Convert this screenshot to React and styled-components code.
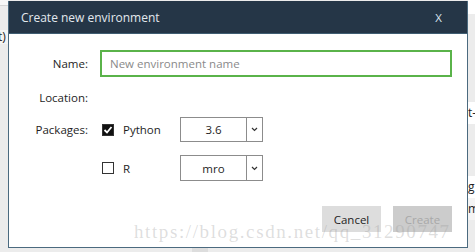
import React from "react";
import styled, { createGlobalStyle } from "styled-components";

const GlobalStyle = createGlobalStyle`
    html, body {
        margin: 0;
        padding: 0;
        background: #ececec;
        overflow: hidden;
    }
`;

const Screen = styled.div`
    width: 475px;
    height: 252px;
    display: flex;
    overflow: hidden;
    position: relative;
    font-family: "Open Sans", "Noto Sans", sans-serif;
    color: #1e1e1e;
`;

const LeftEdge = styled.div`
    width: 8px;
    flex-shrink: 0;
    display: flex;
    flex-direction: column;
    overflow: hidden;
    background: #ececec;
`;

const EdgeBand = styled.div`
    height: ${(p) => p.$h}px;
    flex-shrink: 0;
    background: ${(p) => p.$bg || "#ececec"};
    border-bottom: ${(p) => (p.$line ? "1px solid #d4d4d4" : "none")};
    font-size: 12px;
    line-height: ${(p) => p.$h}px;
    white-space: nowrap;
    text-indent: ${(p) => p.$indent || 0}px;
    color: #222;
`;

const Middle = styled.div`
    width: 460px;
    flex-shrink: 0;
    display: flex;
    flex-direction: column;
    padding-top: 1px;
`;

const RightEdge = styled.div`
    width: 7px;
    flex-shrink: 0;
    display: flex;
    flex-direction: column;
    overflow: hidden;
    background: #ececec;
`;

const Dialog = styled.div`
    height: 247px;
    box-sizing: border-box;
    border: 1px solid #4b6a7f;
    border-top: none;
    background: #fff;
    display: flex;
    flex-direction: column;
`;

const TitleBar = styled.div`
    height: 33px;
    flex-shrink: 0;
    background: #253647;
    border-bottom: 1px solid #3f5d72;
    box-sizing: border-box;
    display: flex;
    align-items: center;
    justify-content: space-between;
    padding: 0 25px 0 12px;
    color: #e3e9ee;
    font-size: 12px;
`;

const Close = styled.span`
    font-size: 11.5px;
    color: #dbe6f0;
`;

const Body = styled.div`
    flex: 1;
    display: flex;
    flex-direction: column;
    padding: 0 15px 15px 0;
`;

const FieldRow = styled.div`
    height: ${(p) => p.$h}px;
    margin-top: ${(p) => p.$mt || 0}px;
    display: flex;
    align-items: center;
`;

const Label = styled.div`
    width: 79px;
    margin-right: 12px;
    text-align: right;
    font-size: 11.5px;
    flex-shrink: 0;
`;

const Spacer = styled.div`
    width: 91px;
    flex-shrink: 0;
`;

const NameInput = styled.input`
    flex: 1;
    height: 27px;
    box-sizing: border-box;
    border: 2px solid #5ab34a;
    padding: 0 8px;
    font-family: inherit;
    font-size: 11.5px;
    outline: none;
    &::placeholder {
        color: #8a8a8a;
    }
`;

const Package = styled.label`
    width: 80px;
    display: flex;
    align-items: center;
    font-size: 11.5px;
`;

const Box = styled.span`
    width: 12px;
    height: 12px;
    box-sizing: border-box;
    margin-left: 2px;
    margin-right: 9px;
    border: 1px solid #333;
    background: ${(p) => (p.$checked ? "#111" : "#fff")};
    display: flex;
    align-items: center;
    justify-content: center;
`;

const Select = styled.div`
    width: 83px;
    height: ${(p) => p.$h}px;
    box-sizing: border-box;
    border: 1px solid #8c8c8c;
    display: flex;
    font-size: 11.5px;
`;

const SelectValue = styled.div`
    flex: 1;
    display: flex;
    align-items: center;
    justify-content: center;
    border-right: 1px solid #8c8c8c;
`;

const SelectArrow = styled.div`
    width: 15px;
    display: flex;
    align-items: center;
    justify-content: center;
`;

const Footer = styled.div`
    margin-top: auto;
    display: flex;
    justify-content: flex-end;
    gap: 12px;
`;

const Button = styled.button`
    width: 59px;
    height: 26px;
    border: none;
    padding: 0;
    font-family: inherit;
    font-size: 11.5px;
    background: ${(p) => (p.$disabled ? "#cccccc" : "#dddddd")};
    color: ${(p) => (p.$disabled ? "#a8a8a8" : "#1e1e1e")};
`;

const BottomStrip = styled.div`
    flex: 1;
    display: flex;
    padding-left: 184px;
`;

const Patch = styled.div`
    width: 16px;
    background: #dddddd;
`;

const Watermark = styled.div`
    position: absolute;
    left: 134px;
    top: 221px;
    font-family: "Liberation Serif", serif;
    font-size: 19px;
    letter-spacing: 1.6px;
    color: rgba(160, 160, 160, 0.35);
    white-space: nowrap;
    pointer-events: none;
`;

const Chevron = () => (
    <svg width="7" height="5" viewBox="0 0 7 5">
        <polyline points="1,1 3.5,3.5 6,1" fill="none" stroke="#333" strokeWidth="1.2" />
    </svg>
);

const Check = () => (
    <svg width="10" height="10" viewBox="0 0 10 10">
        <polyline points="1.5,5 4,7.5 8.5,2" fill="none" stroke="#fff" strokeWidth="1.8" />
    </svg>
);

export default function App() {
    return (
        <Screen>
            <GlobalStyle />
            <LeftEdge>
                <EdgeBand $h={5} $bg="#f7f7f7" $line />
                <EdgeBand $h={24} />
                <EdgeBand $h={14} $bg="#f4f4f4" $indent={-2}>t)</EdgeBand>
            </LeftEdge>
            <Middle>
                <Dialog>
                    <TitleBar>
                        <span>Create new environment</span>
                        <Close>X</Close>
                    </TitleBar>
                    <Body>
                        <FieldRow $h={27} $mt={16}>
                            <Label>Name:</Label>
                            <NameInput placeholder="New environment name" />
                        </FieldRow>
                        <FieldRow $h={40}>
                            <Label>Location:</Label>
                        </FieldRow>
                        <FieldRow $h={25}>
                            <Label>Packages:</Label>
                            <Package>
                                <Box $checked>
                                    <Check />
                                </Box>
                                Python
                            </Package>
                            <Select $h={25}>
                                <SelectValue>3.6</SelectValue>
                                <SelectArrow>
                                    <Chevron />
                                </SelectArrow>
                            </Select>
                        </FieldRow>
                        <FieldRow $h={26} $mt={13}>
                            <Spacer />
                            <Package>
                                <Box />R
                            </Package>
                            <Select $h={26}>
                                <SelectValue>mro</SelectValue>
                                <SelectArrow>
                                    <Chevron />
                                </SelectArrow>
                            </Select>
                        </FieldRow>
                        <Footer>
                            <Button>Cancel</Button>
                            <Button $disabled>Create</Button>
                        </Footer>
                    </Body>
                </Dialog>
                <BottomStrip>
                    <Patch />
                </BottomStrip>
            </Middle>
            <RightEdge>
                <EdgeBand $h={14} $bg="#ffffff" />
                <EdgeBand $h={88} />
                <EdgeBand $h={22} $bg="#ffffff" $indent={0}>t-</EdgeBand>
                <EdgeBand $h={52} />
                <EdgeBand $h={22} $bg="#ffffff">g</EdgeBand>
                <EdgeBand $h={22} $bg="#f4f4f4">m</EdgeBand>
            </RightEdge>
            <Watermark>https://blog.csdn.net/qq_31290747</Watermark>
        </Screen>
    );
}
